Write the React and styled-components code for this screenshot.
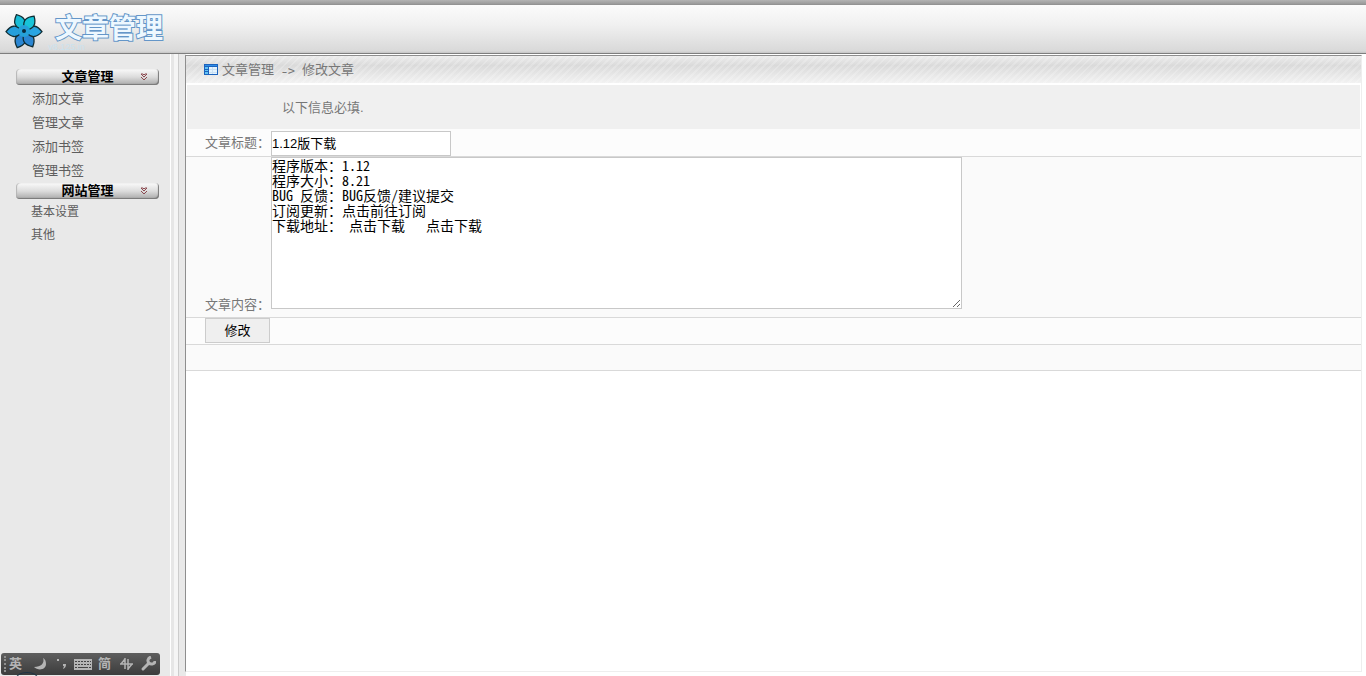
import React, { useState } from "react";
import styled, { createGlobalStyle } from "styled-components";

const GlobalStyle = createGlobalStyle`
	html,
	body,
	#root {
		height: 100%;
	}
	body {
		margin: 0;
		background: #e9e9e9;
		color: #777777;
		font: 13px/16px "Liberation Sans", "Noto Sans CJK SC", sans-serif;
		overflow: hidden;
	}
`;

const Page = styled.div`
	display: flex;
	flex-direction: column;
	height: 100%;
`;

const Header = styled.header`
	display: flex;
	align-items: center;
	box-sizing: border-box;
	height: 54px;
	flex: none;
	gap: 5px;
	padding: 10px 4px 0;
	border-bottom: 1px solid #7e7e7e;
	background: linear-gradient(
		#b4b4b4,
		#9a9a9a 4px,
		#8c8c8c 5px,
		#fbfbfb 5px,
		#f1f1f1 24px,
		#d9d9d9 51px,
		#c4c4c4 53px
	);
`;

const Brand = styled.div`
	align-self: flex-start;
	padding-top: 5px;
`;

const Title = styled.h1`
	margin: 0;
	padding-left: 7px;
	font-size: 27px;
	line-height: 28px;
	font-weight: bold;
	color: #eef8ff;
	-webkit-text-stroke: 2px #6496c8;
	paint-order: stroke fill;
`;

const Version = styled.div`
	font-size: 9px;
	line-height: 9px;
	color: #cbe2ee;
`;

const Main = styled.div`
	display: flex;
	flex: 1;
	min-height: 0;
	padding-right: 4px;
	background: linear-gradient(to right, #e9e9e9 186px, #ffffff 186px);
`;

const Sidebar = styled.nav`
	width: 170px;
	flex: none;
	display: flex;
	flex-direction: column;
	box-sizing: border-box;
	padding: 15px 10px 0 16px;
	background: #e9e9e9;
`;

const MenuButton = styled.button`
	display: grid;
	grid-template-columns: 1fr auto 1fr;
	align-items: center;
	height: 16px;
	width: 143px;
	flex: none;
	padding: 0 11px;
	border: 0;
	border-radius: 4px;
	background: linear-gradient(#fafafa, #dcdcdc 50%, #a9a9a9);
	box-shadow: inset -1px -1px 1px #777777, inset 1px 0 1px #b5b5b5;
	color: #000000;
	font: bold 13px/16px "Liberation Sans", "Noto Sans CJK SC", sans-serif;
	svg {
		justify-self: end;
	}
`;

const MenuList = styled.ul`
	list-style: none;
	margin: 0;
	padding: 2px 0 0 ${(props) => (props.$small ? 15 : 16)}px;
	font-size: ${(props) => (props.$small ? 12 : 13)}px;
	line-height: ${(props) => (props.$small ? 23 : 24)}px;
`;

const MenuLink = styled.a`
	color: #5e5e5e;
	text-decoration: none;
`;

const Gutter = styled.div`
	width: 8px;
	flex: none;
	border-right: 1px solid #cccccc;
	background: linear-gradient(
		to right,
		#ffffff 1px,
		#e6e6e6 1px,
		#e6e6e6 4px,
		#f5f5f5 4px
	);
	margin-right: 6px;
`;

const Panel = styled.main`
	flex: 1;
	display: flex;
	flex-direction: column;
	margin: 1px 0 4px;
	border: 1px solid #8e8e8e;
	border-right-color: #eeeeee;
	border-bottom-color: #eeeeee;
	background: #ffffff;
`;

const Crumbs = styled.div`
	display: flex;
	align-items: center;
	height: 27px;
	padding-left: 18px;
	gap: 7px;
	background: repeating-linear-gradient(
			135deg,
			rgba(255, 255, 255, 0.2) 0 2px,
			transparent 2px 5px
		),
		linear-gradient(#ececec, #dadada 35%, #f2f2f2);
`;

const Section = styled.span`
	display: flex;
	align-items: center;
	gap: 4px;
`;

const Arrow = styled.span`
	font: 14px/16px "Noto Sans Mono CJK SC", "Liberation Mono", monospace;
`;

const Notice = styled.p`
	margin: 2px 1px 0;
	padding: 15px 95px 13px;
	background: #f0f0f0;
`;

const Row = styled.div`
	display: flex;
	align-items: ${(props) => props.$align || "center"};
	min-height: ${(props) => props.$height || 26}px;
	padding: 0 19px;
	padding-bottom: ${(props) => (props.$align === "flex-end" ? 4 : 0)}px;
	border-bottom: 1px solid #d9d9d9;
	background: ${(props) => (props.$light ? "#fcfcfc" : "#fafafa")};
`;

const Label = styled.label`
	width: 66px;
	flex: none;
	line-height: 16px;
`;

const TextInput = styled.input`
	box-sizing: border-box;
	width: 180px;
	height: 25px;
	margin-top: 2px;
	padding: 0 0 2px;
	border: 1px solid #c8c8c8;
	background: #ffffff;
	color: #000000;
	font: inherit;
`;

const TextBox = styled.textarea`
	box-sizing: border-box;
	width: 691px;
	max-width: 100%;
	height: 152px;
	margin: 0 0 4px;
	padding: 0;
	border: 1px solid #c8c8c8;
	background: #ffffff;
	color: #000000;
	font: 14px/15px "Noto Sans Mono CJK SC", "Liberation Mono", "Noto Sans CJK SC", monospace;
`;

const SubmitButton = styled.button`
	width: 65px;
	height: 25px;
	padding: 0;
	border: 1px solid #cccccc;
	background: #efefef;
	color: #000000;
	font: inherit;
`;

// input method bar, floats over the bottom of the window
const ImeBar = styled.div`
	position: fixed;
	left: 1px;
	bottom: 1px;
	display: flex;
	align-items: center;
	gap: 3px;
	box-sizing: border-box;
	width: 159px;
	height: 22px;
	padding: 0 3px;
	border-radius: 3px;
	background: linear-gradient(#5e5e5e, #3c3c3c);
	color: #b4b4b4;
	font-size: 13px;
	font-weight: bold;
	line-height: 20px;
	&::after {
		content: "";
		position: absolute;
		left: 15px;
		top: 19px;
		width: 20px;
		height: 10px;
		border: 1px solid #1d3446;
		border-radius: 50%;
	}
`;

const ImeGrip = styled.span`
	height: 16px;
	border-left: 2px dotted #8f8f8f;
`;

const petals = [
	{ angle: 202, color: "#2b86d2" },
	{ angle: 151, color: "#2b86d2" },
	{ angle: 268, color: "#259fdd" },
	{ angle: 92, color: "#2aa5e2" },
	{ angle: 335, color: "#17bcd6" },
	{ angle: 34, color: "#17c4d8" },
];

const Flower = () => (
	<svg width="39" height="36" viewBox="0 0 39 36">
		<g stroke="#0f2c33" strokeWidth="1.3">
			{petals.map(({ angle, color }) => (
				<path
					key={angle}
					fill={color}
					transform={`translate(20 17) rotate(${angle})`}
					d="M-2-3C-7-8-6-13 0-18C6-13 7-8 2-3L0 0z"
				/>
			))}
		</g>
		<circle cx="20" cy="17" r="6" fill="#25a0d8" />
		<circle cx="20" cy="17" r="2" fill="#0a2a3c" />
	</svg>
);

const Chevrons = () => (
	<svg width="8" height="8" viewBox="0 0 8 8" fill="none" stroke="#8c4a50">
		<path d="M1 1h2l1 1l1-1h2L4 4zM1 4l3 3l3-3" />
	</svg>
);

const TableIcon = () => (
	<svg width="14" height="11" viewBox="0 0 14 11">
		<path fill="#1c63bd" d="M0 0h14v11H0z" />
		<path fill="#2f8ee8" d="M1 1h12v1H1z" />
		<path fill="#e4f3fd" d="M5 3h8v7H5z" />
		<path fill="#62c4f5" d="M1 3h3v2H1zM1 6h3v1H1zM1 8h3v2H1z" />
		<path fill="#c9e0f4" d="M5 5h8v1H5zM5 8h8v1H5zM8 3h1v7H8z" />
	</svg>
);

const ImeIcons = () => (
	<svg width="70" height="16" viewBox="0 0 70 16" fill="#b4b4b4">
		<path d="M18 2c2 5-2 9-9 9c4 4 12 3 12-3c0-3-1-5-3-6z" />
		<path d="M32 3h2v2h-2zM38 8h3c0 3-1 4-3 5l1-3h-1z" />
		<path d="M49 3h18v11H49z" />
		<path stroke="#444444" d="M50 5.500h16M50 8.500h16" strokeDasharray="2 1" />
		<path stroke="#444444" d="M50 11.500h2M53 11.500h10M64 11.500h2" />
	</svg>
);

const ImeTools = () => (
	<svg width="42" height="16" viewBox="0 0 42 16" fill="none" stroke="#b4b4b4">
		<path strokeWidth="1.5" d="M6 8h13M11 2v11M14 3v11M11 3L7 8M14 13l4-5" />
		<path strokeWidth="3" strokeLinecap="round" d="M29 13l6-6" />
		<path strokeWidth="3" d="M37 1c-3 1-4 4-2 6s6 1 6-2" />
	</svg>
);

const menus = [
	{ title: "文章管理", items: ["添加文章", "管理文章", "添加书签", "管理书签"] },
	{ title: "网站管理", items: ["基本设置", "其他"], small: true },
];

const content = `程序版本：1.12
程序大小：8.21
BUG 反馈：BUG反馈/建议提交
订阅更新：点击前往订阅
下载地址： 点击下载   点击下载`;

const Menu = ({ title, items, small }) => {
	const [open, setOpen] = useState(true);

	return (
		<>
			<MenuButton type="button" aria-expanded={open} onClick={() => setOpen(!open)}>
				<span />
				{title}
				<Chevrons />
			</MenuButton>
			{open && (
				<MenuList $small={small}>
					{items.map((item) => (
						<li key={item}>
							<MenuLink href="#">{item}</MenuLink>
						</li>
					))}
				</MenuList>
			)}
		</>
	);
};

const ArticleForm = () => (
	<form onSubmit={(e) => e.preventDefault()}>
		<Row $light $height={27}>
			<Label htmlFor="title">文章标题：</Label>
			<TextInput id="title" defaultValue="1.12版下载" />
		</Row>
		<Row $align="flex-end">
			<Label htmlFor="content">文章内容：</Label>
			<TextBox id="content" defaultValue={content} spellCheck={false} />
		</Row>
		<Row $light $align="flex-start">
			<SubmitButton type="submit">修改</SubmitButton>
		</Row>
		<Row $height={25} />
	</form>
);

export default function App() {
	return (
		<Page>
			<GlobalStyle />
			<Header>
				<Flower />
				<Brand>
					<Title>文章管理</Title>
					<Version>v8.125.in</Version>
				</Brand>
			</Header>
			<Main>
				<Sidebar>
					{menus.map((menu) => (
						<Menu key={menu.title} {...menu} />
					))}
				</Sidebar>
				<Gutter />
				<Panel>
					<Crumbs>
						<Section>
							<TableIcon />
							文章管理
						</Section>
						<Arrow>-&gt;</Arrow>
						<span>修改文章</span>
					</Crumbs>
					<Notice>以下信息必填.</Notice>
					<ArticleForm />
				</Panel>
			</Main>
			<ImeBar>
				<ImeGrip />
				<span>英</span>
				<ImeIcons />
				<span>简</span>
				<ImeTools />
			</ImeBar>
		</Page>
	);
}
